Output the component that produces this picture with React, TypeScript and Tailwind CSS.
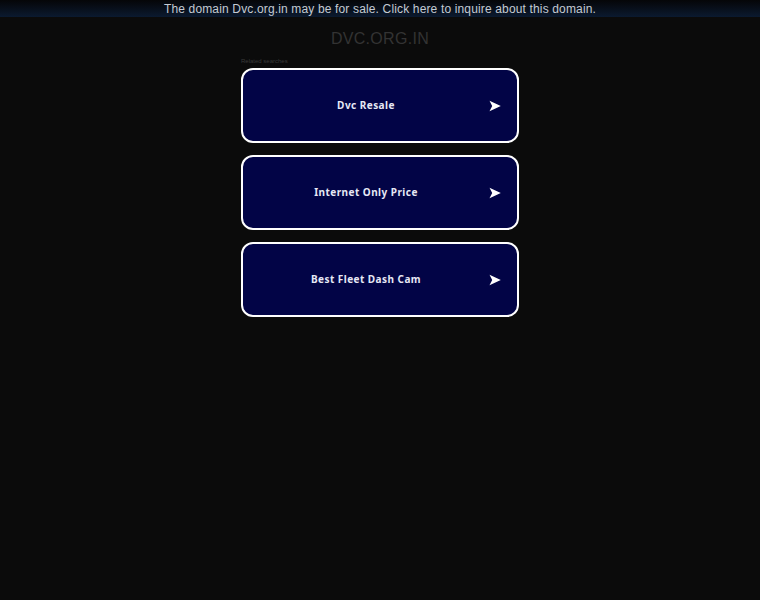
import React from "react";

const items = ["Dvc Resale", "Internet Only Price", "Best Fleet Dash Cam"];

function Arrow() {
  return (
    <svg width="12" height="12" viewBox="0 0 12 12" className="absolute right-[16px] top-1/2 -translate-y-1/2">
      <path d="M0.5 0.8 L11.8 6 L0.5 11.2 L3.2 6 Z" fill="#ffffff" />
    </svg>
  );
}

export default function App() {
  return (
    <div className="min-h-[600px] w-full bg-[#0b0b0b] flex flex-col items-center" style={{ fontFamily: "'Liberation Sans', Arial, sans-serif" }}>
      <div className="w-full h-[17px] bg-gradient-to-b from-[#050608] to-[#0b1a30] flex items-center justify-center">
        <span className="text-[12px] text-[#c4cad2] tracking-[0.15px] leading-none">
          The domain Dvc.org.in may be for sale. Click here to inquire about this domain.
        </span>
      </div>
      <div className="mt-[14px] text-[16px] leading-none text-[#333333] tracking-[0.3px]">DVC.ORG.IN</div>
      <div className="mt-[11px] w-[278px]">
        <div className="text-[6px] text-[#3a3a3a] leading-none">Related searches</div>
        <div className="mt-[4px] flex flex-col gap-[12px]">
          {items.map((t) => (
            <div
              key={t}
              className="relative h-[75px] rounded-[12px] border-2 border-white bg-[#020446] flex items-center justify-center pr-[28px]"
            >
              <span className="text-[10px] font-bold text-[#e6e8f5] tracking-[0.45px]" style={{ fontFamily: "'Noto Sans', sans-serif" }}>
                {t}
              </span>
              <Arrow />
            </div>
          ))}
        </div>
      </div>
    </div>
  );
}
